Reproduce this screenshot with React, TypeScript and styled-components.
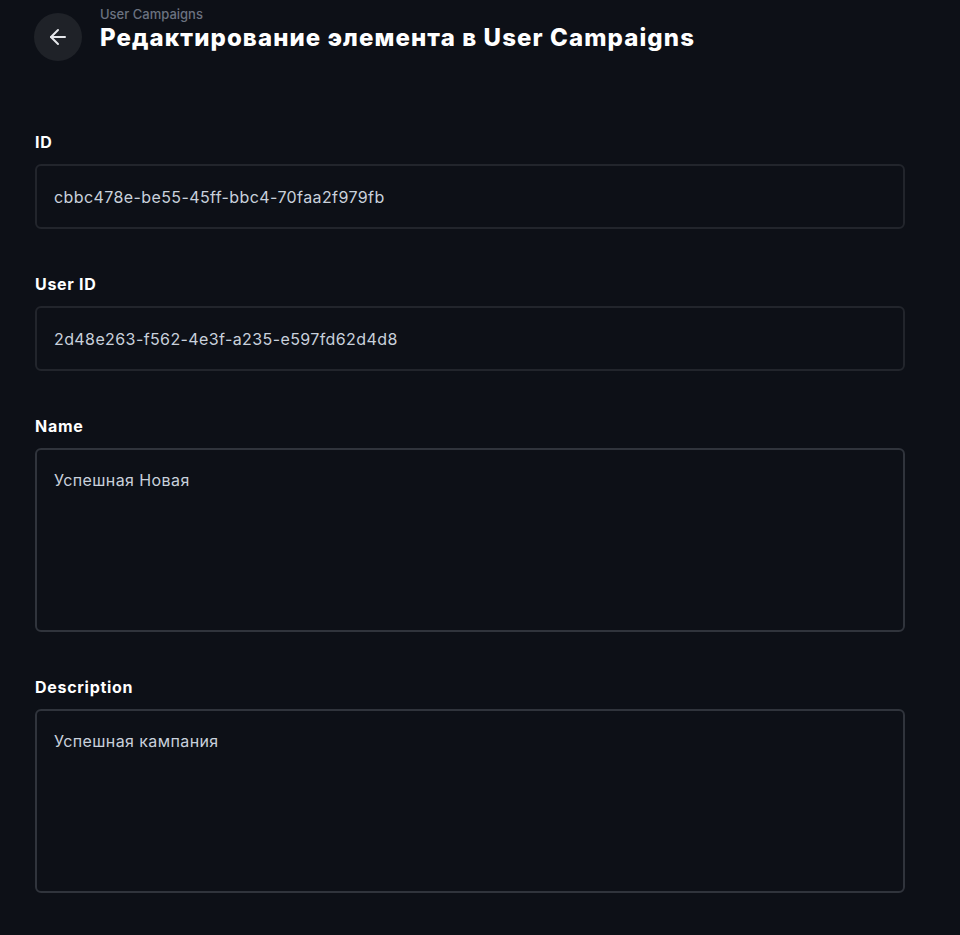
import React from "react";
import styled, { createGlobalStyle } from "styled-components";
import { ArrowLeft } from "lucide-react";

const Global = createGlobalStyle`
  html, body { margin: 0; padding: 0; background: #0d1017; }
  body { font-family: Inter, "Noto Sans", sans-serif; color: #f3f4f6; }
  * { box-sizing: border-box; }
`;

const Page = styled.div`
  min-height: 935px;
  background: #0d1017;
  padding: 13px 0 0 34px;
`;

const Header = styled.header`
  display: flex;
  align-items: center;
  gap: 18px;
`;

const BackButton = styled.button`
  width: 48px;
  height: 48px;
  border-radius: 50%;
  border: none;
  background: #1f2228;
  color: #e5e7eb;
  display: flex;
  align-items: center;
  justify-content: center;
  padding: 0;
  cursor: pointer;
`;

const Titles = styled.div`
  display: flex;
  flex-direction: column;
  margin-top: -14px;
`;

const Crumb = styled.div`
  font-size: 13px;
  font-weight: 500;
  color: #6b7280;
  line-height: 16px;
`;

const Title = styled.h1`
  margin: 0;
  font-size: 24px;
  font-weight: 800;
  line-height: 32px;
  letter-spacing: 1.1px;
  color: #ffffff;
`;

const Form = styled.div`
  width: 870px;
  margin: 69px 0 0 1px;
  display: flex;
  flex-direction: column;
  gap: 43px;
`;

const Field = styled.div`
  display: flex;
  flex-direction: column;
  gap: 10px;
`;

const Label = styled.label`
  font-size: 16px;
  font-weight: 700;
  line-height: 24px;
  letter-spacing: 0.7px;
  color: #ffffff;
`;

const Box = styled.div<{ $tall?: boolean }>`
  height: ${(p) => (p.$tall ? "184px" : "65px")};
  border: ${(p) => (p.$tall ? "2px solid #30343c" : "2px solid #22252c")};
  border-radius: 6px;
  padding: ${(p) => (p.$tall ? "18px 17px" : "0 17px")};
  display: flex;
  align-items: ${(p) => (p.$tall ? "flex-start" : "center")};
  font-size: 16px;
  line-height: 24px;
  letter-spacing: 0.4px;
  color: #c9d1dc;
`;

const fields = [
  { label: "ID", value: "cbbc478e-be55-45ff-bbc4-70faa2f979fb" },
  { label: "User ID", value: "2d48e263-f562-4e3f-a235-e597fd62d4d8" },
  { label: "Name", value: "Успешная Новая", tall: true },
  { label: "Description", value: "Успешная кампания", tall: true },
];

export default function App() {
  return (
    <>
      <Global />
      <Page>
        <Header>
          <BackButton aria-label="Назад">
            <ArrowLeft size={24} strokeWidth={2} />
          </BackButton>
          <Titles>
            <Crumb>User Campaigns</Crumb>
            <Title>Редактирование элемента в User Campaigns</Title>
          </Titles>
        </Header>
        <Form>
          {fields.map((f) => (
            <Field key={f.label}>
              <Label>{f.label}</Label>
              <Box $tall={f.tall}>{f.value}</Box>
            </Field>
          ))}
        </Form>
      </Page>
    </>
  );
}
